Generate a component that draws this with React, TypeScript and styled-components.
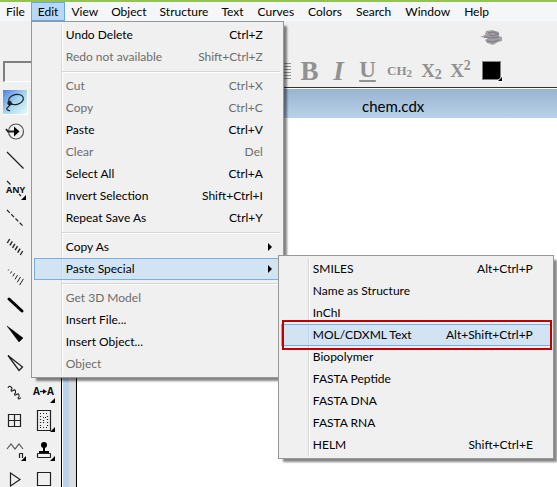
import React from "react";
import styled, { createGlobalStyle, css } from "styled-components";

const GlobalStyle = createGlobalStyle`
  * { box-sizing: border-box; }
  body { margin: 0; overflow: hidden; background: #f0f0f0; }
  button, input { font: inherit; color: inherit; }
  ul { list-style: none; margin: 0; padding: 0; }
`;

const Page = styled.div`
  height: 100vh;
  display: flex;
  flex-direction: column;
  overflow: hidden;
  background: #f0f0f0;
  border-top: 2px solid #92c353;
  color: #000;
  font: 12px/18px Lato, "Open Sans", sans-serif;
`;

const MenuBar = styled.ul`
  display: flex;
  flex: none;
  height: 19px;
  background: #f5f6f7;
`;

const MenuBarItem = styled.li`
  position: relative;
  &:nth-child(-n + 6) { margin-left: -1px; }
`;

const MenuBarButton = styled.button<{ $open?: boolean }>`
  height: 19px;
  padding: 0 6px;
  border: 1px solid ${(p) => (p.$open ? "#66a7e8" : "transparent")};
  background: ${(p) => (p.$open ? "#b8d8f9" : "transparent")};
  line-height: 17px;
  white-space: nowrap;
`;

const Menu = styled.ul<{ $sub?: boolean }>`
  position: absolute;
  z-index: 2;
  top: ${(p) => (p.$sub ? "-3px" : "100%")};
  left: ${(p) => (p.$sub ? "calc(100% - 3px)" : "0")};
  width: ${(p) => (p.$sub ? "276px" : "253px")};
  padding: 2px;
  border: 1px solid #979797;
  background: linear-gradient(90deg, #d7d7d7 1px, #fff 1px, #fff 2px, transparent 2px) 29px 2px / 2px calc(100% - 4px) no-repeat, #f0f0f0;
  box-shadow: 4px 4px 2px -1px rgba(0, 0, 0, 0.48);
`;

const Entry = styled.li<{ $marked?: boolean }>`
  position: relative;
  ${(p) =>
    p.$marked &&
    css`
      &::after {
        content: "";
        position: absolute;
        inset: -4px -1px -4px 1px;
        border: 2px solid #c00000;
        pointer-events: none;
      }
    `}
`;

const EntryButton = styled.button<{ $active?: boolean }>`
  display: flex;
  align-items: center;
  justify-content: space-between;
  width: 100%;
  height: 22px;
  padding: 0 17px 0 31px;
  border: 1px solid ${(p) => (p.$active ? "#78aee5" : "transparent")};
  background: ${(p) => (p.$active ? "rgba(180, 215, 245, 0.5)" : "transparent")};
  line-height: 20px;
  text-align: left;
  white-space: nowrap;
  &:disabled { color: #6d6d6d; }
`;

const Separator = styled.li`
  height: 7px;
  margin: 0 1px 0 28px;
  background: linear-gradient(#d7d7d7 1px, #fff 1px) 0 3px / 100% 2px no-repeat;
`;

const Arrow = styled.svg`
  width: 4px;
  height: 8px;
  margin-right: -9px;
`;

const Toolbar = styled.div`
  display: flex;
  flex: none;
  align-items: flex-end;
  justify-content: space-between;
  height: 66px;
  padding: 0 53px 5px 3px;
`;

const FontBox = styled.input`
  width: 150px;
  height: 21px;
  border: 1px solid #fff;
  border-top: 2px solid #808080;
  border-left: 2px solid #808080;
  background: #f0f0f0;
`;

const Formatting = styled.div`
  display: flex;
  align-items: flex-end;
  color: #919191;
  font-family: "Liberation Serif", serif;
  font-weight: bold;
`;

const FormatButton = styled.button<{ $width: number; $size: number }>`
  display: flex;
  align-items: center;
  justify-content: center;
  width: ${(p) => p.$width}px;
  height: 22px;
  padding: 0;
  border: 0;
  background: none;
  font-size: ${(p) => p.$size}px;
  line-height: 22px;
  white-space: nowrap;
  sub, sup { font-size: 14px; line-height: 0; }
  sub { vertical-align: -2px; }
  sup { vertical-align: 7px; }
  u {
    padding-bottom: 3px;
    text-decoration-thickness: 2px;
    text-underline-offset: 3px;
    text-decoration-skip-ink: none;
  }
`;

const SmallSub = styled.span`
  padding-top: 4px;
  font-size: 11px;
`;

const ColorTool = styled.div`
  display: flex;
  flex-direction: column;
  align-items: center;
  gap: 15px;
  width: 24px;
  margin-left: 5px;
`;

const IconButton = styled.button`
  display: block;
  padding: 0;
  border: 0;
  background: none;
  svg { display: block; }
`;

const Workspace = styled.div`
  display: flex;
  flex: 1;
  min-height: 0;
`;

const Palette = styled.div`
  display: grid;
  flex: none;
  grid-template-columns: 29px 29px;
  grid-auto-rows: 29px;
  padding: 1px 2px 0 1px;
`;

const Tool = styled.button<{ $column: number; $row: number }>`
  grid-column: ${(p) => p.$column};
  grid-row: ${(p) => p.$row};
  padding: 0;
  border: 0;
  background: none;
  svg { display: block; }
`;

const DocumentArea = styled.main`
  display: flex;
  flex: 1;
  flex-direction: column;
  min-width: 0;
  border-top: 1px solid #333;
  border-left: 1px solid #000;
  background: #fff;
`;

const TitleBar = styled.header`
  flex: none;
  height: 29px;
  margin-top: 1px;
  padding-left: 300px;
  background: linear-gradient(#99b4d1, #b9d1ea);
  font-size: 15px;
  line-height: 34px;
`;

const Sheet = styled.div`
  flex: 1;
  margin-left: 1px;
  border-left: 6px solid #b9d1ea;
  background: linear-gradient(90deg, #dcdcdc 7px, #000 7px, #000 8px, #fff 8px);
  background-origin: padding-box;
`;

type Item = { label: string; keys?: string; off?: boolean; active?: boolean; marked?: boolean; sub?: Item[] } | null;

const specialItems: Item[] = [
  { label: "SMILES", keys: "Alt+Ctrl+P" },
  { label: "Name as Structure" },
  { label: "InChI" },
  { label: "MOL/CDXML Text", keys: "Alt+Shift+Ctrl+P", active: true, marked: true },
  { label: "Biopolymer" },
  { label: "FASTA Peptide" },
  { label: "FASTA DNA" },
  { label: "FASTA RNA" },
  { label: "HELM", keys: "Shift+Ctrl+E" },
];

const editItems: Item[] = [
  { label: "Undo Delete", keys: "Ctrl+Z" },
  { label: "Redo not available", keys: "Shift+Ctrl+Z", off: true },
  null,
  { label: "Cut", keys: "Ctrl+X", off: true },
  { label: "Copy", keys: "Ctrl+C", off: true },
  { label: "Paste", keys: "Ctrl+V" },
  { label: "Clear", keys: "Del", off: true },
  { label: "Select All", keys: "Ctrl+A" },
  { label: "Invert Selection", keys: "Shift+Ctrl+I" },
  { label: "Repeat Save As", keys: "Ctrl+Y" },
  null,
  { label: "Copy As", sub: [] },
  { label: "Paste Special", active: true, sub: specialItems },
  null,
  { label: "Get 3D Model", off: true },
  { label: "Insert File..." },
  { label: "Insert Object..." },
  { label: "Object", off: true },
];

function MenuList({ items, sub }: { items: Item[]; sub?: boolean }) {
  return (
    <Menu $sub={sub}>
      {items.map((item, i) =>
        item ? (
          <Entry key={i} $marked={item.marked}>
            <EntryButton disabled={item.off} $active={item.active}>
              <span>{item.label}</span>
              {item.keys && <span>{item.keys}</span>}
              {item.sub && (
                <Arrow viewBox="0 0 4 8"><path d="M0 0l4 4-4 4z" /></Arrow>
              )}
            </EntryButton>
            {item.sub && item.sub.length > 0 && <MenuList items={item.sub} sub />}
          </Entry>
        ) : (
          <Separator key={i} />
        )
      )}
    </Menu>
  );
}

const corner = <path d="M25 20v5h-5z" fill="#000" stroke="none" />;

const hashes = (from: number, to: number, width: number) =>
  [0, 1, 2, 3, 4, 5].map((n) => {
    const x = 7.5 + n * 2.6;
    const y = 8 + n * 2.4;
    const half = from + ((to - from) * n) / 5;
    return <path key={n} strokeWidth={width} d={`M${x - half * 0.6} ${y + half}L${x + half * 0.6} ${y - half}`} />;
  });

const tools: { name: string; column: number; row: number; art: React.ReactNode }[] = [
  {
    name: "Lasso", column: 1, row: 1,
    art: (
      <>
        <defs>
          <linearGradient id="lasso" x1="0" y1="0" x2="1" y2="1">
            <stop offset="0" stopColor="#4f7fe0" />
            <stop offset="0.5" stopColor="#a5d5ee" />
            <stop offset="1" stopColor="#e4fbfb" />
          </linearGradient>
        </defs>
        <path d="M2 2h25v25H2z" fill="#fff" stroke="none" />
        <path d="M2 2h24v24H2z" fill="url(#lasso)" stroke="none" />
        <ellipse cx="15" cy="11.5" rx="7.5" ry="5" transform="rotate(-15 15 11.5)" />
        <path d="M8 14l3 2-2 1-3 3c-1 2 1 2 3 3" />
        <circle cx="8.5" cy="15" r="1.6" fill="#222" />
      </>
    ),
  },
  {
    name: "Structure perspective", column: 1, row: 2,
    art: (
      <>
        <circle cx="15" cy="14.5" r="7.5" stroke="#555" />
        <path d="M5 12l2 2.500h7" strokeWidth="1.800" />
        <path d="M13 9.500l5.500 5-5.500 5z" fill="#000" stroke="none" />
      </>
    ),
  },
  { name: "Solid bond", column: 1, row: 3, art: <path d="M6 6l16.500 16.500" /> },
  {
    name: "Any bond", column: 1, row: 4,
    art: (
      <>
        <path d="M6 6l3.500 3.500M18 19l2 2" />
        <text x="14.500" y="18" textAnchor="middle" fontSize="9" fontWeight="bold" fontFamily="Noto Sans, sans-serif" fill="#111" stroke="none">ANY</text>
        {corner}
      </>
    ),
  },
  { name: "Dashed bond", column: 1, row: 5, art: <path d="M6 6l16 16" strokeDasharray="4 2" /> },
  { name: "Hashed bond", column: 1, row: 6, art: hashes(2, 2, 1.4) },
  { name: "Hashed wedge", column: 1, row: 7, art: hashes(0.5, 3.2, 1) },
  { name: "Bold bond", column: 1, row: 8, art: <path d="M8 8l13 12" strokeWidth="3" strokeLinecap="round" stroke="#000" /> },
  { name: "Wedge bond", column: 1, row: 9, art: <path d="M6 6l16 12-4 4z" fill="#000" stroke="#000" strokeWidth="0.5" /> },
  { name: "Hollow wedge", column: 1, row: 10, art: <path d="M7 6.500l14.500 11.500-3.500 3.500z" strokeWidth="1.3" /> },
  {
    name: "Wavy bond", column: 1, row: 11,
    art: <path d="M7 10q1-3 3-1t0 3q0 2 2 .5t2.500 .5-1 3q0 2 2 .5t2.500 .5-1 3q1 2 3-.5" strokeWidth="1.100" />,
  },
  { name: "Table", column: 1, row: 12, art: <path d="M7.500 7.500h12v12h-12zM13.500 7.500v12M7.500 13.500h12" /> },
  {
    name: "Chain", column: 1, row: 13,
    art: (
      <>
        <path d="M6 13l4-5 4 5 4-5 4 5" stroke="#555" />
        <path d="M18.500 22v-4.500M18.500 17.500h3v4.500" />
        {corner}
      </>
    ),
  },
  { name: "Play", column: 1, row: 14, art: <path d="M9.500 8l9.500 6.500-9.500 6.500z" /> },
  {
    name: "Reaction mapping", column: 2, row: 11,
    art: (
      <>
        <text x="3" y="17" fontSize="10" fontWeight="bold" fontFamily="Noto Sans, sans-serif" fill="#111" stroke="none">A</text>
        <text x="17" y="17" fontSize="10" fontWeight="bold" fontFamily="Noto Sans, sans-serif" fill="#111" stroke="none">A</text>
        <path d="M10 13.500h4" strokeWidth="1.300" />
        <path d="M13 11l4 2.500-4 2.500z" fill="#111" stroke="none" />
        {corner}
      </>
    ),
  },
  {
    name: "Plate", column: 2, row: 12,
    art: (
      <>
        <path d="M7.500 3.500h13v20h-13z" />
        <path d="M10 6.500h9M10 20.500h9M10.500 9v10M17.500 9v10" strokeDasharray="1 2" />
        <path d="M13 10.500h3M13.500 13v4" strokeDasharray="1 1" />
        {corner}
      </>
    ),
  },
  {
    name: "Templates", column: 2, row: 13,
    art: (
      <>
        <circle cx="14" cy="9" r="3" fill="#000" stroke="none" />
        <path d="M13 11h2v4h4v2H9v-2h4z" fill="#000" stroke="none" />
        <rect x="7.500" y="17.500" width="13" height="4" rx="0.500" />
        {corner}
      </>
    ),
  },
  { name: "Rectangle", column: 2, row: 14, art: <path d="M7.500 7.500h13v13h-13z" /> },
];

const menuNames = ["File", "Edit", "View", "Object", "Structure", "Text", "Curves", "Colors", "Search", "Window", "Help"];

export default function App() {
  return (
    <Page>
      <GlobalStyle />
      <MenuBar>
        {menuNames.map((name) => (
          <MenuBarItem key={name}>
            <MenuBarButton $open={name === "Edit"}>{name}</MenuBarButton>
            {name === "Edit" && <MenuList items={editItems} />}
          </MenuBarItem>
        ))}
      </MenuBar>
      <Toolbar>
        <FontBox aria-label="Font" />
        <Formatting>
          <FormatButton $width={24} $size={12} aria-label="Justify">
            <svg width="16" height="18" stroke="#919191">
              <path d="M0 1.500h16M0 4.500h16M0 7.500h16M0 10.500h16M0 13.500h16M0 16.500h16" />
            </svg>
          </FormatButton>
          <FormatButton $width={29} $size={27}>B</FormatButton>
          <FormatButton $width={29} $size={27}><i>I</i></FormatButton>
          <FormatButton $width={29} $size={23}><u>U</u></FormatButton>
          <FormatButton $width={35} $size={13}>CH<SmallSub>2</SmallSub></FormatButton>
          <FormatButton $width={29} $size={19}><span>X<sub>2</sub></span></FormatButton>
          <FormatButton $width={29} $size={19}><span>X<sup>2</sup></span></FormatButton>
          <ColorTool>
            <IconButton aria-label="Clean up">
              <svg width="24" height="17">
                <path d="M0 8l5-2 1-4 6-1 7 2v4l3 1v4l-4 1-5 3-6-2-2-3 3-2z" fill="#a3a1a6" />
                <path d="M8 4l6-1 4 2-4 2-5-1M4 8l9 1 6-1M7 12l6 1 6-2" fill="none" stroke="#858389" strokeWidth="1.500" />
              </svg>
            </IconButton>
            <IconButton aria-label="Color">
              <svg width="21" height="21">
                <path d="M.5.500h18v18H.5z" fill="#000" stroke="#808080" />
                <path d="M21 14v7h-7z" fill="#fff" />
                <path d="M20 16v4h-4z" fill="#000" />
              </svg>
            </IconButton>
          </ColorTool>
        </Formatting>
      </Toolbar>
      <Workspace>
        <Palette>
          {tools.map((tool) => (
            <Tool key={tool.name} $column={tool.column} $row={tool.row} aria-label={tool.name}>
              <svg width="29" height="29" fill="none" stroke="#222" strokeWidth="1.2">
                {tool.art}
              </svg>
            </Tool>
          ))}
        </Palette>
        <DocumentArea>
          <TitleBar>chem.cdx</TitleBar>
          <Sheet />
        </DocumentArea>
      </Workspace>
    </Page>
  );
}
